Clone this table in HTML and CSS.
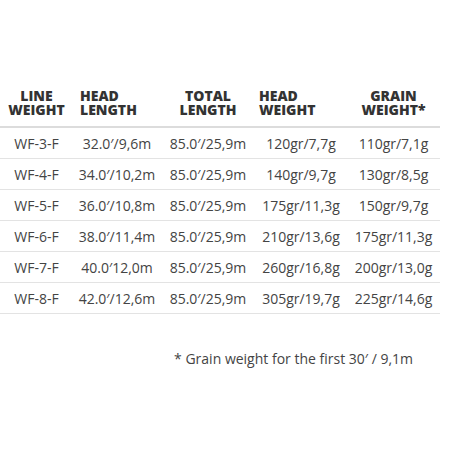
FILE: index.html
```html
<!DOCTYPE html>
<html>
<head>
<meta charset="utf-8">
<link rel="stylesheet" href="styles.css">
</head>
<body>
<div class="page">
  <div class="table">
    <div class="row head">
      <div class="c c1">LINE<br>WEIGHT</div>
      <div class="c c2">HEAD<br>LENGTH</div>
      <div class="c c3">TOTAL<br>LENGTH</div>
      <div class="c c4">HEAD<br>WEIGHT</div>
      <div class="c c5">GRAIN<br>WEIGHT*</div>
    </div>
    <div class="row">
      <div class="c c1">WF-3-F</div>
      <div class="c c2">32.0′/9,6m</div>
      <div class="c c3">85.0′/25,9m</div>
      <div class="c c4">120gr/7,7g</div>
      <div class="c c5">110gr/7,1g</div>
    </div>
    <div class="row">
      <div class="c c1">WF-4-F</div>
      <div class="c c2">34.0′/10,2m</div>
      <div class="c c3">85.0′/25,9m</div>
      <div class="c c4">140gr/9,7g</div>
      <div class="c c5">130gr/8,5g</div>
    </div>
    <div class="row">
      <div class="c c1">WF-5-F</div>
      <div class="c c2">36.0′/10,8m</div>
      <div class="c c3">85.0′/25,9m</div>
      <div class="c c4">175gr/11,3g</div>
      <div class="c c5">150gr/9,7g</div>
    </div>
    <div class="row">
      <div class="c c1">WF-6-F</div>
      <div class="c c2">38.0′/11,4m</div>
      <div class="c c3">85.0′/25,9m</div>
      <div class="c c4">210gr/13,6g</div>
      <div class="c c5">175gr/11,3g</div>
    </div>
    <div class="row">
      <div class="c c1">WF-7-F</div>
      <div class="c c2">40.0′12,0m</div>
      <div class="c c3">85.0′/25,9m</div>
      <div class="c c4">260gr/16,8g</div>
      <div class="c c5">200gr/13,0g</div>
    </div>
    <div class="row">
      <div class="c c1">WF-8-F</div>
      <div class="c c2">42.0′/12,6m</div>
      <div class="c c3">85.0′/25,9m</div>
      <div class="c c4">305gr/19,7g</div>
      <div class="c c5">225gr/14,6g</div>
    </div>
  </div>
  <p class="note">* Grain weight for the first 30′ / 9,1m</p>
</div>
</body>
</html>
```
FILE: styles.css
```css
html, body {
  margin: 0;
  padding: 0;
  background: #ffffff;
}
body {
  font-family: "Open Sans", "Liberation Sans", sans-serif;
  color: #444444;
  font-size: 14px;
}
.page {
  width: 452px;
  height: 452px;
  padding-top: 89px;
  box-sizing: border-box;
}
.table {
  width: 440px;
  display: flex;
  flex-direction: column;
}
.row {
  display: grid;
  grid-template-columns: 73px 88px 94px 92px 93px;
  height: 31px;
  box-sizing: border-box;
  border-bottom: 1px solid #e3e3e3;
  line-height: 30px;
  padding-top: 1px;
}
.row.head {
  height: auto;
  line-height: 14px;
  padding: 0 0 9px 0;
  border-bottom: 2px solid #dcdcdc;
  font-weight: 800;
  color: #333333;
}
.c {
  text-align: center;
  white-space: nowrap;
}
.head .c2 {
  text-align: left;
  padding-left: 7px;
}
.head .c4 {
  text-align: left;
  padding-left: 4px;
}
.note {
  margin: 35px 0 0 0;
  width: 413px;
  text-align: right;
  font-size: 14px;
  line-height: 19px;
  color: #444444;
}
```
